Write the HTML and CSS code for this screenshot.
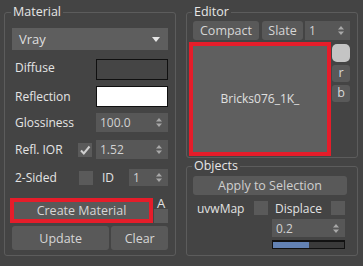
FILE: index.html
```html
<!DOCTYPE html>
<html>
<head>
<meta charset="utf-8">
<link rel="stylesheet" href="styles.css">
</head>
<body>
<div class="app">
  <fieldset class="group left">
    <legend>Material</legend>
    <div class="dropdown"><span>Vray</span><svg class="dd-arrow" width="8" height="5" viewBox="0 0 8 5"><path d="M0 0H8L4 5Z" fill="#e6e6e6"/></svg></div>
    <div class="row r-diffuse"><span class="lbl up">Diffuse</span><div class="swatch dark"></div></div>
    <div class="row r-refl"><span class="lbl">Reflection</span><div class="swatch white"></div></div>
    <div class="row r-gloss"><span class="lbl">Glossiness</span><div class="spinner w72"><span>100.0</span><svg class="spin" width="6" height="9" viewBox="0 0 6 9"><path d="M0 3.5L3 0L6 3.5Z M0 5.5H6L3 9Z" fill="#a8a8a8"/></svg></div></div>
    <div class="row r-ior"><span class="lbl">Refl. IOR</span><div class="check"><svg width="14" height="14" viewBox="0 0 14 14"><path d="M3 7.5L5.8 10.5L11.5 3.5" stroke="#cfcfcf" stroke-width="2" fill="none"/></svg></div><div class="spinner w72 ml4"><span>1.52</span><svg class="spin" width="6" height="9" viewBox="0 0 6 9"><path d="M0 3.5L3 0L6 3.5Z M0 5.5H6L3 9Z" fill="#a8a8a8"/></svg></div></div>
    <div class="row r-sided"><span class="lbl">2-Sided</span><div class="check"></div><span class="id">ID</span><div class="spinner w39"><span>1</span><svg class="spin" width="6" height="9" viewBox="0 0 6 9"><path d="M0 3.5L3 0L6 3.5Z M0 5.5H6L3 9Z" fill="#a8a8a8"/></svg></div></div>
    <div class="create-row">
      <button class="btn create">Create Material</button>
      <span class="a">A</span>
      <span class="acheck"></span>
    </div>
    <div class="row r-update"><button class="btn update">Update</button><button class="btn clear">Clear</button></div>
  </fieldset>
  <div class="rightcol">
    <fieldset class="group editor">
      <legend>Editor</legend>
      <div class="row e-top"><button class="btn compact">Compact</button><button class="btn slate">Slate</button><div class="spinner w45"><span>1</span><svg class="spin" width="6" height="9" viewBox="0 0 6 9"><path d="M0 3.5L3 0L6 3.5Z M0 5.5H6L3 9Z" fill="#a8a8a8"/></svg></div></div>
      <div class="e-main">
        <div class="preview">Bricks076_1K_</div>
        <div class="side">
          <div class="sbtn round"></div>
          <div class="sbtn">r</div>
          <div class="sbtn">b</div>
        </div>
      </div>
    </fieldset>
    <fieldset class="group objects">
      <legend>Objects</legend>
      <button class="btn apply">Apply to Selection</button>
      <div class="row o-opts"><span class="olbl uvw">uvwMap</span><div class="check"></div><span class="olbl disp">Displace</span><div class="check"></div></div>
      <div class="spinner w73 o-spin"><span>0.2</span><svg class="spin" width="6" height="9" viewBox="0 0 6 9"><path d="M0 3.5L3 0L6 3.5Z M0 5.5H6L3 9Z" fill="#a8a8a8"/></svg></div>
      <div class="progress"><div class="fill" style="width:36px"></div></div>
    </fieldset>
  </div>
</div>
</body>
</html>
```
FILE: styles.css
```css
* { box-sizing: border-box; }
html, body { margin: 0; padding: 0; }
body {
  background: #444444;
  font-family: "Open Sans", "Liberation Sans", sans-serif;
  font-size: 11.5px;
  color: #e2e2e2;
  width: 363px;
  height: 266px;
  overflow: hidden;
}
.app {
  display: flex;
  gap: 10px;
  padding: 5px 0 0 4px;
}
.group {
  margin: 0;
  border: 1px solid #5c5c5c;
  border-radius: 3px;
  padding: 0 6px;
  min-width: 0;
}
.group legend {
  font-size: 12.5px;
  line-height: 14px;
  height: 14px;
  padding: 0 2px;
  margin-left: -1px;
  color: #e6e6e6;
}
.left {
  width: 172px;
  height: 251px;
  padding: 9px 7px 0 7px;
}
.rightcol {
  width: 172px;
  display: flex;
  flex-direction: column;
  gap: 1px;
}
.dropdown {
  height: 22px;
  background: #5e5e5e;
  display: flex;
  align-items: center;
  justify-content: space-between;
  padding: 0 8px 0 7px;
  font-size: 13px;
  color: #dedede;
}
.row {
  display: flex;
  align-items: center;
}
.lbl {
  flex: 1;
  padding-left: 3px;
  font-size: 12px;
  color: #e4e4e4;
}
.lbl.up { padding-bottom: 4px; }
.r-diffuse { height: 21px; margin-top: 9px; }
.r-refl { height: 21px; margin-top: 6px; }
.r-gloss { height: 19px; margin-top: 6px; }
.r-ior { height: 19px; margin-top: 8px; }
.r-sided { height: 17px; margin-top: 10px; }
.create-row {
  display: grid;
  grid-template-columns: 137px 14px;
  grid-template-rows: 11px 14px;
  column-gap: 5px;
  height: 25px;
  margin-top: 12px;
}
.r-update { height: 24px; margin-top: 3px; gap: 2px; }
.swatch {
  width: 72px;
  height: 21px;
  border: 1px solid #101010;
}
.swatch.dark { background: #454545; }
.swatch.white { background: #ffffff; }
.spinner {
  height: 19px;
  background: #575757;
  display: flex;
  align-items: center;
  justify-content: space-between;
  padding: 0 6px 0 4px;
  font-size: 12px;
  color: #d2d2d2;
}
.w72 { width: 72px; }
.w39 { width: 39px; height: 17px; }
.w45 { width: 45px; }
.w73 { width: 73px; height: 18px; }
.ml4 { margin-left: 4px; }
.check {
  width: 14px;
  height: 14px;
  flex: 0 0 auto;
  background: #5a5a5a;
  display: flex;
}
.r-sided .check { margin-right: 9px; }
.id {
  width: 27px;
  font-size: 12px;
}
.btn {
  margin: 0;
  border: none;
  border-radius: 3px;
  background: #595959;
  color: #d6d6d6;
  font-family: inherit;
  font-size: 12px;
  padding: 0;
  display: flex;
  align-items: center;
  justify-content: center;
}
.create {
  grid-row: 1 / 3;
  grid-column: 1;
  width: 135px;
  height: 17px;
  margin: 4px 0 0 2px;
  border-radius: 0;
  outline: 4px solid #e51d2a;
  font-size: 12.5px;
}
.a {
  grid-row: 1;
  grid-column: 2;
  display: block;
  text-align: center;
  line-height: 10px;
  font-size: 13px;
}
.acheck {
  grid-row: 2;
  grid-column: 2;
  display: block;
  width: 14px;
  height: 14px;
  background: #5c5c5c;
}
.update { width: 98px; height: 24px; font-size: 12.5px; }
.clear { width: 57px; height: 24px; font-size: 12.5px; }
.editor {
  height: 153px;
  padding-top: 2px;
}
.e-top { height: 19px; }
.compact { width: 66px; height: 19px; font-size: 12.5px; }
.slate { width: 41px; height: 19px; margin-left: 3px; font-size: 12.5px; }
.e-top .spinner { margin-left: 2px; }
.e-main {
  display: flex;
  margin-top: 4px;
}
.preview {
  width: 134px;
  height: 106px;
  margin-top: 2px;
  background: #5f5f5f;
  outline: 4px solid #e51d2a;
  display: flex;
  align-items: center;
  justify-content: center;
  padding-bottom: 1px;
  font-size: 12px;
  color: #e0e0e0;
}
.side {
  margin-left: 5px;
  display: flex;
  flex-direction: column;
  gap: 3px;
}
.sbtn {
  width: 18px;
  height: 17px;
  border-radius: 3px;
  background: #595959;
  font-size: 12.5px;
  color: #d8d8d8;
  display: flex;
  align-items: center;
  justify-content: center;
  line-height: 1;
}
.sbtn.round {
  height: 18px;
  background: #c4c4c4;
  border-radius: 5px;
}
.objects {
  height: 97px;
  padding-top: 3px;
}
.apply {
  width: 154px;
  height: 19px;
  font-size: 12.5px;
  color: #cfcfcf;
}
.o-opts { height: 14px; margin-top: 6px; }
.olbl { font-size: 12px; }
.uvw { padding-left: 4px; width: 61px; }
.disp { margin-left: 7px; width: 56px; }
.o-spin { margin: 4px 0 0 79px; }
.progress {
  width: 73px;
  height: 9px;
  margin: 3px 0 0 79px;
  background: #3a3a3a;
  border: 1px solid #111;
  border-top-width: 2px;
}
.fill {
  height: 100%;
  background: #6382b4;
}
```
